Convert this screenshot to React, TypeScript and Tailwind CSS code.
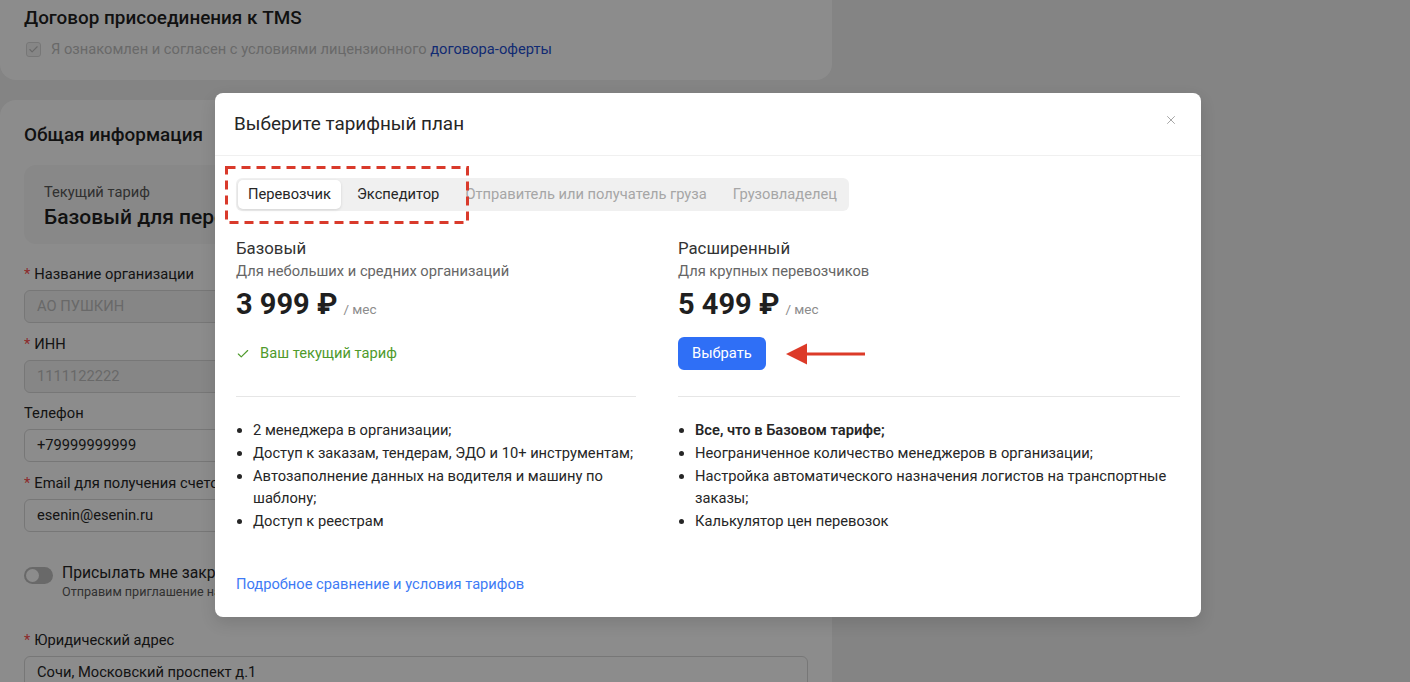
import { Check, X } from 'lucide-react';

type FieldProps = {
  label: string;
  value: string;
  required?: boolean;
  disabled?: boolean;
  clip?: boolean;
  className?: string;
};

function Field({ label, value, required, disabled, clip = true, className }: FieldProps) {
  return (
    <div className={className}>
      <div
        className={`text-[14.7px] leading-[22px] text-[#262626] ${clip ? 'w-[200px] overflow-hidden whitespace-nowrap' : ''}`}
      >
        {required && <span className="mr-1 text-[#ff4d4f]">*</span>}
        {label}
      </div>
      <div
        className={`mt-[5px] flex h-[33px] items-center rounded-md border border-[#d9d9d9] px-3 text-[14.7px] ${
          disabled ? 'bg-[#f5f5f5] text-[#bfbfbf]' : 'bg-white text-[#262626]'
        }`}
      >
        {value}
      </div>
    </div>
  );
}

const tabs = ['Перевозчик', 'Экспедитор', 'Отправитель или получатель груза', 'Грузовладелец'];

function Arrow() {
  return (
    <svg width="80" height="22" viewBox="0 0 80 22" className="ml-[20px]">
      <line x1="18" y1="11" x2="79" y2="11" stroke="#dc3a28" strokeWidth="3" />
      <polygon points="0,11 21,0.5 21,21.5" fill="#dc3a28" />
    </svg>
  );
}

export default function App() {
  return (
    <div className="relative h-[682px] w-[1410px] overflow-hidden bg-[#f0f0f0] font-['Roboto','Noto_Sans',sans-serif]">
      {/* page behind the dialog */}
      <div className="flex w-[832px] flex-col gap-5">
        <section className="h-[80px] rounded-b-2xl bg-white px-6 pt-[4px]">
          <h2 className="text-[18.9px] font-medium leading-7 text-[#1f1f1f]">Договор присоединения к TMS</h2>
          <label className="mt-[6px] flex items-center gap-[10px] text-[14.7px] leading-[22px] text-[#bfbfbf]">
            <span className="ml-[2px] flex h-[15px] w-[15px] items-center justify-center rounded-[3px] border border-[#d9d9d9] bg-[#f5f5f5]">
              <Check size={11} strokeWidth={2.5} className="text-[#bfbfbf]" />
            </span>
            <span>
              Я ознакомлен и согласен с условиями лицензионного{' '}
              <span className="text-[#1f4fd1]">договора-оферты</span>
            </span>
          </label>
        </section>

        <section className="h-[620px] rounded-t-2xl bg-white px-6 pt-[21px]">
          <h2 className="text-[18.9px] font-medium leading-7 text-[#1f1f1f]">Общая информация</h2>
          <div className="mt-4 rounded-xl bg-[#f7f7f7] px-5 pb-[13px] pt-4">
            <div className="text-[14.7px] leading-[22px] text-[#595959]">Текущий тариф</div>
            <div className="w-[185px] overflow-hidden whitespace-nowrap text-[21px] font-medium leading-7 text-[#1f1f1f]">
              Базовый для перевозчика
            </div>
          </div>

          <Field className="mt-[19px]" label="Название организации" value="АО ПУШКИН" required disabled />
          <Field className="mt-[10px]" label="ИНН" value="1111122222" required disabled />
          <Field className="mt-[9px]" label="Телефон" value="+79999999999" />
          <Field className="mt-[10px]" label="Email для получения счетов" value="esenin@esenin.ru" required />

          <div className="mt-[30px] flex items-start gap-[9px]">
            <span className="mt-[5px] flex h-[17px] w-[29px] items-center rounded-full bg-[#bfbfbf] px-[2px]">
              <span className="h-[13px] w-[13px] rounded-full bg-white" />
            </span>
            <div className="w-[162px] overflow-hidden whitespace-nowrap">
              <div className="text-[15.7px] leading-[22px] text-[#262626]">Присылать мне закрывающие документы</div>
              <div className="text-[12.6px] leading-4 text-[#595959]">Отправим приглашение на подключение</div>
            </div>
          </div>

          <Field
            className="mt-[29px]"
            label="Юридический адрес"
            value="Сочи, Московский проспект д.1"
            required
            clip={false}
          />
        </section>
      </div>

      {/* overlay */}
      <div className="absolute inset-0 bg-black/45" />

      {/* dialog */}
      <div className="absolute left-[215px] top-[93px] w-[986px] rounded-lg bg-white shadow-[0_6px_16px_rgba(0,0,0,0.12)]">
        <div className="flex h-[63px] items-center justify-between border-b border-[#f0f0f0] pl-[19px] pr-[23px]">
          <h1 className="text-[18.9px] leading-7 text-[#262626]">Выберите тарифный план</h1>
          <X size={14} strokeWidth={1.5} className="-mt-[8px] text-[#9a9a9a]" />
        </div>

        <div className="px-[21px] pb-[22px] pt-[22px]">
          <div className="inline-flex gap-[6px] rounded-md bg-[#f0f0f0] p-[2px]">
            {tabs.map((t, i) => (
              <div
                key={t}
                className={`flex h-[29px] items-center rounded-[5px] px-[10px] text-[14.7px] ${
                  i === 0
                    ? 'bg-white text-[#262626] shadow-[0_1px_3px_rgba(0,0,0,0.12)]'
                    : i === 1
                      ? 'text-[#262626]'
                      : 'text-[#a6a6a6]'
                }`}
              >
                {t}
              </div>
            ))}
          </div>

          <div className="mt-[26px] flex gap-[42px]">
            <div className="w-[400px]">
              <h3 className="text-[16.8px] leading-[22px] text-[#333]">Базовый</h3>
              <p className="mt-[3px] text-[14.7px] leading-[18px] text-[#666]">Для небольших и средних организаций</p>
              <div className="mt-[8px] flex items-baseline">
                <span className="text-[29px] font-bold leading-8 text-[#1f1f1f]">3 999 ₽</span>
                <span className="ml-[6px] text-[13.5px] text-[#8c8c8c]">/ мес</span>
              </div>
              <div className="mt-[17px] flex h-[33px] items-center gap-[10px] text-[14.7px] text-[#4f9a2c]">
                <Check size={14} strokeWidth={2} />
                Ваш текущий тариф
              </div>
              <div className="mt-[26px] h-px bg-[#e6e6e6]" />
              <ul className="mt-[22px] list-disc pl-[17px] text-[14.7px] leading-[22.8px] text-[#262626]">
                <li>2 менеджера в организации;</li>
                <li>Доступ к заказам, тендерам, ЭДО и 10+ инструментам;</li>
                <li>Автозаполнение данных на водителя и машину по шаблону;</li>
                <li>Доступ к реестрам</li>
              </ul>
            </div>

            <div className="w-[502px]">
              <h3 className="text-[16.8px] leading-[22px] text-[#333]">Расширенный</h3>
              <p className="mt-[3px] text-[14.7px] leading-[18px] text-[#666]">Для крупных перевозчиков</p>
              <div className="mt-[8px] flex items-baseline">
                <span className="text-[29px] font-bold leading-8 text-[#1f1f1f]">5 499 ₽</span>
                <span className="ml-[6px] text-[13.5px] text-[#8c8c8c]">/ мес</span>
              </div>
              <div className="mt-[17px] flex h-[33px] items-center">
                <button className="h-[33px] rounded-md bg-[#2f6ff6] px-[14px] text-[14.7px] text-white">Выбрать</button>
                <Arrow />
              </div>
              <div className="mt-[26px] h-px bg-[#e6e6e6]" />
              <ul className="mt-[22px] list-disc pl-[17px] text-[14.7px] leading-[22.8px] text-[#262626]">
                <li className="font-semibold">Все, что в Базовом тарифе;</li>
                <li>Неограниченное количество менеджеров в организации;</li>
                <li>Настройка автоматического назначения логистов на транспортные заказы;</li>
                <li>Калькулятор цен перевозок</li>
              </ul>
            </div>
          </div>

          <a className="mt-10 block text-[14.7px] leading-[22px] text-[#3e7bf5]">Подробное сравнение и условия тарифов</a>
        </div>

        {/* highlight around the first two tabs */}
        <svg className="absolute left-[10px] top-[73px]" width="244" height="58">
          <rect x="1.5" y="1.5" width="241" height="55" fill="none" stroke="#d93a2b" strokeWidth="3" strokeDasharray="9 6" />
        </svg>
      </div>
    </div>
  );
}
